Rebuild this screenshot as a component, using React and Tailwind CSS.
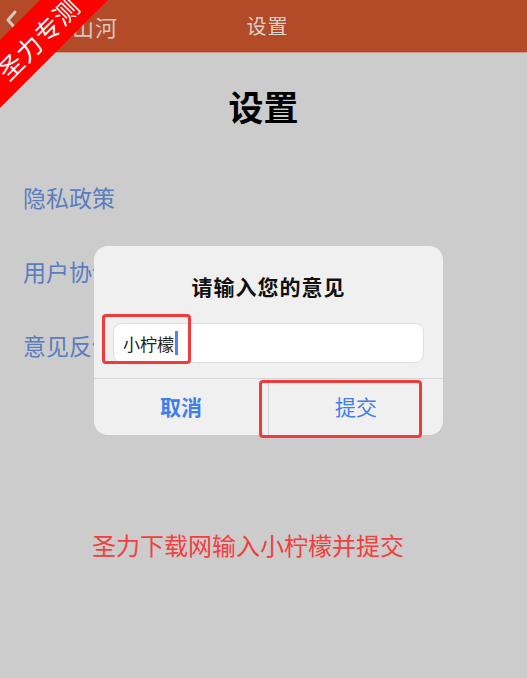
const FONT = { fontFamily: '"Noto Sans CJK SC", "Noto Sans", sans-serif' };

const ITEMS = ["隐私政策", "用户协议", "意见反馈"];

function Ribbon() {
  return (
    <div className="pointer-events-none absolute left-[-43px] top-[13px] flex h-[48px] w-[160px] -rotate-45 items-center justify-center bg-[#fd0000]">
      <span className="mt-[2px] text-[25px] leading-none tracking-[1px] text-white">圣力专测</span>
    </div>
  );
}

function FeedbackDialog() {
  return (
    <div className="absolute left-[94px] top-[246px] flex h-[189px] w-[349px] flex-col rounded-[14px] bg-[#f0f0f0]">
      <p className="pt-[26px] text-center text-[21px] font-bold leading-[28px] tracking-[1px] text-[#111]">请输入您的意见</p>
      <div className="relative mx-[19px] mt-[23px] flex h-[40px] items-center rounded-[9px] border border-[#dedede] bg-white pl-[9px]">
        <span className="text-[17px] leading-none text-[#222]">小柠檬</span>
        <span className="ml-px h-[24px] w-[3px] bg-[#5b7ff0]" />
        <div className="absolute left-[-12px] top-[-10px] h-[50px] w-[89px] rounded-[4px] border-[3px] border-[#f23a3a]" />
      </div>
      <div className="mt-[15px] flex flex-1 border-t border-[#d6d6d6]">
        <button className="flex-1 text-[21px] font-bold text-[#3e7fe8]">取消</button>
        <div className="relative flex flex-1 items-center justify-center border-l border-[#d6d6d6]">
          <span className="text-[21px] text-[#3e7fe8]">提交</span>
          <div className="absolute left-[-10px] top-[1px] h-[58px] w-[163px] rounded-[4px] border-[3px] border-[#f23a3a]" />
        </div>
      </div>
    </div>
  );
}

export default function App() {
  return (
    <div className="relative h-[678px] w-[527px] overflow-hidden bg-[#cccccc]" style={FONT}>
      <div className="relative flex h-[53px] items-center border-b border-[#c99a88] bg-[#b34b29]">
        <svg width="22" height="40" viewBox="0 0 22 40" className="shrink-0 self-start">
          <polyline points="15,12 8,20 15,28" fill="none" stroke="#d4c8c2" strokeWidth="3" strokeLinecap="round" strokeLinejoin="round" />
        </svg>
        <span className="ml-[4px] text-[22px] tracking-[1px] text-[#d4c8c2]">锦绣山河</span>
        <span className="absolute left-1/2 -translate-x-[17px] text-[20px] tracking-[1px] text-[#dcd3cd]">设置</span>
      </div>

      <h1 className="mt-[33px] text-center text-[35px] font-bold leading-[40px] text-black">设置</h1>

      <div className="mt-[34px]">
        {ITEMS.map((item) => (
          <div key={item} className="flex h-[74px] items-center pl-[23px] text-[23px] text-[#5a7dbf]">
            {item}
          </div>
        ))}
      </div>

      <p className="mt-[147px] pl-[92px] text-[24px] leading-[32px] text-[#f23e3e]">圣力下载网输入小柠檬并提交</p>

      <FeedbackDialog />
      <Ribbon />
    </div>
  );
}
